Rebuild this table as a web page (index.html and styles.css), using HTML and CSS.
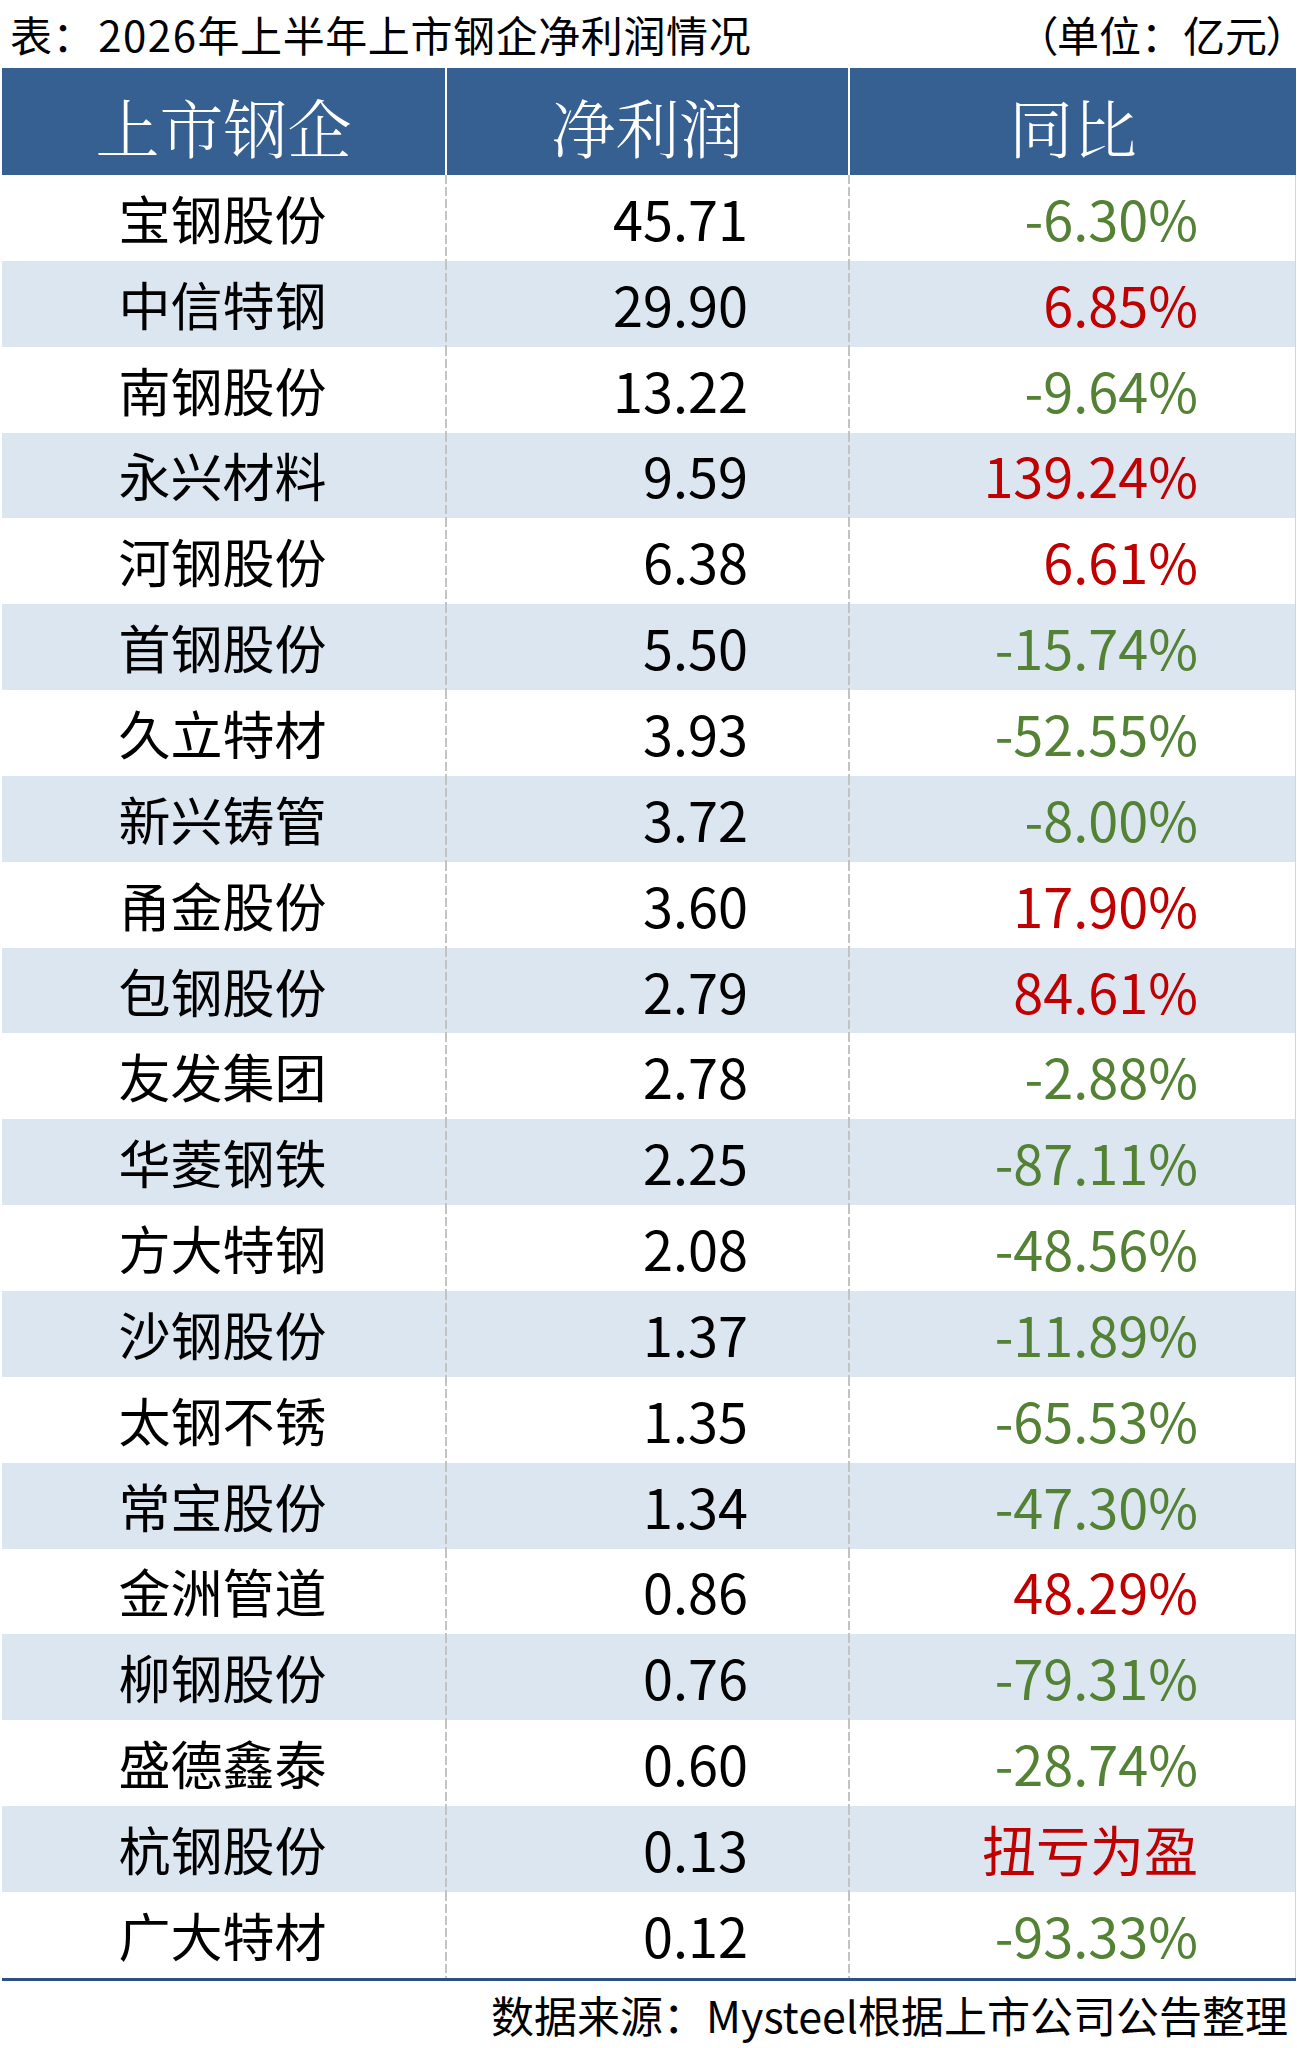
FILE: index.html
```html
<!DOCTYPE html>
<html lang="zh-CN">
<head>
<meta charset="utf-8">
<title>2026年上半年上市钢企净利润情况</title>
<link rel="stylesheet" href="styles.css">
</head>
<body>
<div class="page">
  <div class="caption">
    <div class="caption-title">表：<span class="yr">2026</span>年上半年上市钢企净利润情况</div>
    <div class="caption-unit"><span class="paren">（</span>单位：亿元<span class="paren">）</span></div>
  </div>
  <div class="table">
    <div class="thead">
      <div class="th">上市钢企</div>
      <div class="th th-sep">净利润</div>
      <div class="th th-sep">同比</div>
    </div>
    <div class="tbody">
      <div class="tr"><div class="td name">宝钢股份</div><div class="td num">45.71</div><div class="td pct down">-6.30%</div></div>
      <div class="tr alt"><div class="td name">中信特钢</div><div class="td num">29.90</div><div class="td pct up">6.85%</div></div>
      <div class="tr"><div class="td name">南钢股份</div><div class="td num">13.22</div><div class="td pct down">-9.64%</div></div>
      <div class="tr alt"><div class="td name">永兴材料</div><div class="td num">9.59</div><div class="td pct up">139.24%</div></div>
      <div class="tr"><div class="td name">河钢股份</div><div class="td num">6.38</div><div class="td pct up">6.61%</div></div>
      <div class="tr alt"><div class="td name">首钢股份</div><div class="td num">5.50</div><div class="td pct down">-15.74%</div></div>
      <div class="tr"><div class="td name">久立特材</div><div class="td num">3.93</div><div class="td pct down">-52.55%</div></div>
      <div class="tr alt"><div class="td name">新兴铸管</div><div class="td num">3.72</div><div class="td pct down">-8.00%</div></div>
      <div class="tr"><div class="td name">甬金股份</div><div class="td num">3.60</div><div class="td pct up">17.90%</div></div>
      <div class="tr alt"><div class="td name">包钢股份</div><div class="td num">2.79</div><div class="td pct up">84.61%</div></div>
      <div class="tr"><div class="td name">友发集团</div><div class="td num">2.78</div><div class="td pct down">-2.88%</div></div>
      <div class="tr alt"><div class="td name">华菱钢铁</div><div class="td num">2.25</div><div class="td pct down">-87.11%</div></div>
      <div class="tr"><div class="td name">方大特钢</div><div class="td num">2.08</div><div class="td pct down">-48.56%</div></div>
      <div class="tr alt"><div class="td name">沙钢股份</div><div class="td num">1.37</div><div class="td pct down">-11.89%</div></div>
      <div class="tr"><div class="td name">太钢不锈</div><div class="td num">1.35</div><div class="td pct down">-65.53%</div></div>
      <div class="tr alt"><div class="td name">常宝股份</div><div class="td num">1.34</div><div class="td pct down">-47.30%</div></div>
      <div class="tr"><div class="td name">金洲管道</div><div class="td num">0.86</div><div class="td pct up">48.29%</div></div>
      <div class="tr alt"><div class="td name">柳钢股份</div><div class="td num">0.76</div><div class="td pct down">-79.31%</div></div>
      <div class="tr"><div class="td name">盛德鑫泰</div><div class="td num">0.60</div><div class="td pct down">-28.74%</div></div>
      <div class="tr alt"><div class="td name">杭钢股份</div><div class="td num">0.13</div><div class="td pct up">扭亏为盈</div></div>
      <div class="tr"><div class="td name">广大特材</div><div class="td num">0.12</div><div class="td pct down">-93.33%</div></div>
    </div>
  </div>
  <div class="source">数据来源：Mysteel根据上市公司公告整理</div>
</div>
</body>
</html>
```
FILE: styles.css
```css
* { box-sizing: border-box; }

html, body {
  margin: 0;
  padding: 0;
  background: #ffffff;
}

body {
  font-family: "Noto Sans CJK SC", "Noto Sans", sans-serif;
  color: #000000;
  width: 1297px;
}

.page {
  display: flex;
  flex-direction: column;
}

.caption {
  height: 68px;
  display: flex;
  justify-content: space-between;
  align-items: center;
  padding: 0 9px 0 10px;
  line-height: 1;
}

.caption-title {
  font-size: 42px;
  letter-spacing: 0.6px;
  white-space: nowrap;
  flex-shrink: 0;
}

.yr {
  margin-left: 3px;
  letter-spacing: 1.5px;
}

.caption-unit {
  font-size: 42px;
  white-space: nowrap;
  flex-shrink: 0;
}

.paren {
  font-feature-settings: "palt" 1;
}

.table {
  margin-left: 2px;
  width: 1294px;
  display: flex;
  flex-direction: column;
}

.thead {
  display: grid;
  grid-template-columns: 443px 403px 448px;
  height: 107px;
  background: #366092;
}

.th {
  display: flex;
  align-items: center;
  justify-content: center;
  color: #ffffff;
  font-family: "Noto Serif CJK SC", "Noto Sans CJK SC", serif;
  font-weight: 300;
  font-size: 64px;
  line-height: 1;
  padding-top: 6px;
}

.th-sep {
  border-left: 2px solid #ffffff;
}

.tbody {
  display: grid;
  grid-auto-rows: 85.85px;
  border-bottom: 3px solid #2d4f86;
}

.tr {
  display: grid;
  grid-template-columns: 443px 403px 448px;
  background: #ffffff;
}

.tr.alt {
  background: #dce6f1;
}

.td {
  display: flex;
  align-items: center;
  font-size: 52px;
  line-height: 1;
}

.name {
  justify-content: center;
  padding-right: 2px;
}

.num,
.pct {
  justify-content: flex-end;
  font-size: 54px;
  background-image: repeating-linear-gradient(to bottom, #c3c3c3 0 9px, transparent 9px 12px);
  background-size: 2px 100%;
  background-repeat: no-repeat;
  background-position: left top;
}

.num {
  padding-right: 100px;
}

.pct {
  padding-right: 97px;
  border-right: 1px solid #d4d4d4;
}

.down { color: #548235; }
.up { color: #c00000; }

.source {
  height: 67px;
  display: flex;
  align-items: center;
  justify-content: flex-end;
  padding-right: 9px;
  font-size: 43px;
  line-height: 1;
  white-space: nowrap;
}
```
